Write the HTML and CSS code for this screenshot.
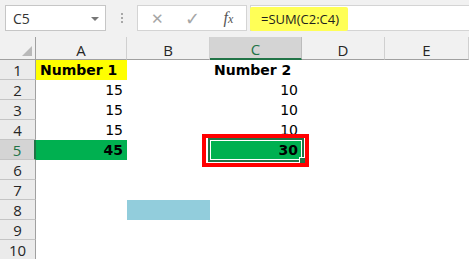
FILE: index.html
```html
<!DOCTYPE html>
<html lang="en">
<head>
    <meta charset="UTF-8">
    <title>SUM formula</title>
    <link rel="stylesheet" href="styles.css">
</head>
<body>
    <div class="toolbar">
        <div class="name-box">
            <span>C5</span>
            <span class="caret"></span>
        </div>
        <div class="grip">
            <span></span><span></span><span></span>
        </div>
        <div class="fx-buttons">
            <span class="btn cancel">&#x2715;</span>
            <span class="btn enter">&#x2713;</span>
            <span class="btn fx"><i>f</i><i class="x">x</i></span>
        </div>
        <div class="formula">
            <span class="marker">=SUM(C2:C4)</span>
        </div>
    </div>

    <div class="sheet">
        <div class="corner"><span class="tri"></span></div>
        <div class="col-head">A</div>
        <div class="col-head">B</div>
        <div class="col-head active">C</div>
        <div class="col-head">D</div>
        <div class="col-head">E</div>

        <div class="row-head">1</div>
        <div class="cell text yellow">Number 1</div>
        <div class="cell"></div>
        <div class="cell text">Number 2</div>
        <div class="cell"></div>
        <div class="cell"></div>

        <div class="row-head">2</div>
        <div class="cell num">15</div>
        <div class="cell"></div>
        <div class="cell num">10</div>
        <div class="cell"></div>
        <div class="cell"></div>

        <div class="row-head">3</div>
        <div class="cell num">15</div>
        <div class="cell"></div>
        <div class="cell num">10</div>
        <div class="cell"></div>
        <div class="cell"></div>

        <div class="row-head">4</div>
        <div class="cell num">15</div>
        <div class="cell"></div>
        <div class="cell num">10</div>
        <div class="cell"></div>
        <div class="cell"></div>

        <div class="row-head active">5</div>
        <div class="cell num total">45</div>
        <div class="cell"></div>
        <div class="cell num total selected">
            30
            <span class="sel-frame"></span>
            <span class="handle"></span>
            <span class="red-box"></span>
        </div>
        <div class="cell"></div>
        <div class="cell"></div>

        <div class="row-head">6</div>
        <div class="cell"></div><div class="cell"></div><div class="cell"></div><div class="cell"></div><div class="cell"></div>

        <div class="row-head">7</div>
        <div class="cell"></div><div class="cell"></div><div class="cell"></div><div class="cell"></div><div class="cell"></div>

        <div class="row-head">8</div>
        <div class="cell"></div>
        <div class="cell blue"></div>
        <div class="cell"></div><div class="cell"></div><div class="cell"></div>

        <div class="row-head">9</div>
        <div class="cell"></div><div class="cell"></div><div class="cell"></div><div class="cell"></div><div class="cell"></div>

        <div class="row-head">10</div>
        <div class="cell"></div><div class="cell"></div><div class="cell"></div><div class="cell"></div><div class="cell"></div>
    </div>
</body>
</html>
```

FILE: styles.css
```css
body {
    margin: 0;
    background-color: #ffffff;
    font-family: "Open Sans", "Noto Sans", sans-serif;
    overflow: hidden;
}

/* formula bar */
.toolbar {
    height: 37px;
    background-color: #f1f1f1;
    display: flex;
    align-items: flex-start;
    padding: 5px 0 0 5px;
    box-sizing: border-box;
}

.name-box {
    width: 101px;
    height: 26px;
    background-color: white;
    border: 1px solid #c6c6c6;
    box-sizing: border-box;
    display: flex;
    align-items: center;
    justify-content: space-between;
    padding: 0 6px 0 7px;
    font-size: 14px;
    color: #333;
}

.caret {
    width: 0;
    height: 0;
    border-left: 4px solid transparent;
    border-right: 4px solid transparent;
    border-top: 4px solid #777;
    margin-top: 1px;
}

.grip {
    width: 31px;
    display: flex;
    flex-direction: column;
    align-items: center;
    gap: 2px;
    padding-top: 8px;
}

.grip span {
    width: 2px;
    height: 2px;
    background-color: #a8a8a8;
}

.fx-buttons {
    width: 110px;
    height: 26px;
    background-color: white;
    border: 1px solid #d4d4d4;
    box-sizing: border-box;
    display: flex;
    align-items: center;
}

.btn {
    width: 36px;
    text-align: center;
    color: #a6a6a6;
    font-size: 18px;
}

.cancel {
    font-size: 15px;
    padding-left: 2px;
}

.fx {
    font-family: "Liberation Serif", serif;
    color: #555;
    font-size: 16px;
}

.fx .x {
    font-size: 12px;
}

.formula {
    flex: 1;
    height: 26px;
    margin-left: 3px;
    background-color: white;
    border: 1px solid #d4d4d4;
    border-right: none;
    box-sizing: border-box;
    display: flex;
    align-items: stretch;
}

.marker {
    background-color: #ffff57;
    border-radius: 2px;
    width: 98px;
    margin: 1px 0 -1px -1px;
    padding-left: 11px;
    box-sizing: border-box;
    font-size: 13px;
    line-height: 25px;
    color: #1e1e1e;
}

/* grid */
.sheet {
    display: grid;
    grid-template-columns: 36px 91px 83px 92px 83px 84px;
    grid-template-rows: 23px repeat(10, 20px);
}

.corner,
.col-head,
.row-head {
    background-color: #ebebeb;
    box-sizing: border-box;
    font-size: 15px;
    color: #262626;
    display: flex;
    align-items: center;
    justify-content: center;
}

.corner {
    background-color: #f1f1f1;
    border-right: 1px solid #a0a0a0;
    border-bottom: 1px solid #a0a0a0;
    position: relative;
}

.tri {
    position: absolute;
    right: 3px;
    bottom: 3px;
    width: 0;
    height: 0;
    border-left: 10px solid transparent;
    border-bottom: 10px solid #b9b9b9;
}

.col-head {
    background-color: #f1f1f1;
    border-right: 1px solid #d0d0d0;
    border-bottom: 1px solid #a0a0a0;
    padding-top: 3px;
}

.col-head.active {
    background-color: #d4d4d4;
    color: #217346;
    border-bottom: 2px solid #217346;
    border-right-color: #bcbcbc;
}

.row-head {
    border-right: 1px solid #a0a0a0;
    border-bottom: 1px solid #c4c4c4;
    padding-top: 1px;
}

.row-head.active {
    background-color: #d4d4d4;
    color: #217346;
    border-right: 2px solid #217346;
}

.cell {
    font-family: "DejaVu Sans", Verdana, sans-serif;
    font-size: 14px;
    color: #000;
    display: flex;
    align-items: center;
    box-sizing: border-box;
    padding: 0 4px;
}

.text {
    font-weight: bold;
    padding-left: 4px;
}

.num {
    justify-content: flex-end;
    padding-right: 4px;
}

.yellow {
    background-color: #ffff00;
}

.total {
    background-color: #00b050;
    font-weight: bold;
}

.blue {
    background-color: #92cddc;
}

.selected {
    position: relative;
    box-shadow: inset 0 0 0 1px #ffffff;
}

.sel-frame {
    position: absolute;
    left: -2px;
    top: -2px;
    right: -2px;
    bottom: -2px;
    border: 2px solid #217346;
}

.handle {
    position: absolute;
    right: -4px;
    bottom: -4px;
    width: 5px;
    height: 5px;
    background-color: #217346;
    border: 1px solid #ffffff;
}

.red-box {
    position: absolute;
    left: -8px;
    top: -6px;
    right: -7px;
    bottom: -7px;
    border: 4px solid #ff0000;
}
```
